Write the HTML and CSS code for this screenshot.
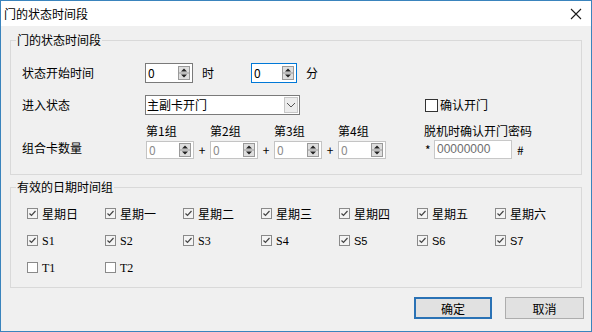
FILE: index.html
```html
<!DOCTYPE html>
<html lang="zh-CN">
<head>
  <meta charset="UTF-8" />
  <title>门的状态时间段</title>
  <link rel="stylesheet" href="styles.css">
</head>
<body>
  <div class="window">
    <div class="titlebar">
      <span class="title">门的状态时间段</span>
      <svg class="close" width="12" height="12" viewBox="0 0 12 12"><path d="M1 1L11 11M11 1L1 11" stroke="#1a1a1a" stroke-width="1.1" fill="none"/></svg>
    </div>

    <div class="content">
      <div class="group g1">
        <div class="group-title">门的状态时间段</div>

        <div class="row r1">
          <span class="label">状态开始时间</span>
          <div class="spin w48"><span class="val">0</span><span class="arrows"><svg width="12" height="14" viewBox="0 0 12 14"><rect x="0.5" y="0.5" width="11" height="13" fill="#dedede" stroke="#9a9a9a"/><line x1="1" y1="7" x2="11" y2="7" stroke="#9a9a9a"/><path d="M3 5.5L6 2.5L9 5.5Z M3 8.5L6 11.5L9 8.5Z" fill="#222"/></svg></span></div>
          <span class="unit">时</span>
          <div class="spin w46 focus"><span class="val">0</span><span class="arrows"><svg width="12" height="14" viewBox="0 0 12 14"><rect x="0.5" y="0.5" width="11" height="13" fill="#dedede" stroke="#9a9a9a"/><line x1="1" y1="7" x2="11" y2="7" stroke="#9a9a9a"/><path d="M3 5.5L6 2.5L9 5.5Z M3 8.5L6 11.5L9 8.5Z" fill="#222"/></svg></span></div>
          <span class="unit">分</span>
        </div>

        <div class="row r2">
          <span class="label">进入状态</span>
          <div class="combo">
            <span class="combo-val">主副卡开门</span>
            <span class="drop"><svg width="10" height="6" viewBox="0 0 10 6"><path d="M1 1L5 5L9 1" stroke="#555" fill="none"/></svg></span>
          </div>
          <div class="check big"><span class="box"></span>确认开门</div>
        </div>

        <div class="row r3">
          <span class="label">组合卡数量</span>
          <div class="card-groups">
            <div class="cg">
              <span class="cg-title">第1组</span>
              <div class="spin dim"><span class="val">0</span><span class="arrows"><svg width="12" height="14" viewBox="0 0 12 14"><rect x="0.5" y="0.5" width="11" height="13" fill="#dedede" stroke="#9a9a9a"/><line x1="1" y1="7" x2="11" y2="7" stroke="#9a9a9a"/><path d="M3 5.5L6 2.5L9 5.5Z M3 8.5L6 11.5L9 8.5Z" fill="#222"/></svg></span></div>
            </div>
            <span class="plus">+</span>
            <div class="cg">
              <span class="cg-title">第2组</span>
              <div class="spin dim"><span class="val">0</span><span class="arrows"><svg width="12" height="14" viewBox="0 0 12 14"><rect x="0.5" y="0.5" width="11" height="13" fill="#dedede" stroke="#9a9a9a"/><line x1="1" y1="7" x2="11" y2="7" stroke="#9a9a9a"/><path d="M3 5.5L6 2.5L9 5.5Z M3 8.5L6 11.5L9 8.5Z" fill="#222"/></svg></span></div>
            </div>
            <span class="plus">+</span>
            <div class="cg">
              <span class="cg-title">第3组</span>
              <div class="spin dim"><span class="val">0</span><span class="arrows"><svg width="12" height="14" viewBox="0 0 12 14"><rect x="0.5" y="0.5" width="11" height="13" fill="#dedede" stroke="#9a9a9a"/><line x1="1" y1="7" x2="11" y2="7" stroke="#9a9a9a"/><path d="M3 5.5L6 2.5L9 5.5Z M3 8.5L6 11.5L9 8.5Z" fill="#222"/></svg></span></div>
            </div>
            <span class="plus">+</span>
            <div class="cg">
              <span class="cg-title">第4组</span>
              <div class="spin dim"><span class="val">0</span><span class="arrows"><svg width="12" height="14" viewBox="0 0 12 14"><rect x="0.5" y="0.5" width="11" height="13" fill="#dedede" stroke="#9a9a9a"/><line x1="1" y1="7" x2="11" y2="7" stroke="#9a9a9a"/><path d="M3 5.5L6 2.5L9 5.5Z M3 8.5L6 11.5L9 8.5Z" fill="#222"/></svg></span></div>
            </div>
          </div>
          <div class="pwd">
            <span class="pwd-title">脱机时确认开门密码</span>
            <div class="pwd-row">
              <span class="sym">*</span>
              <div class="pwd-input">00000000</div>
              <span class="sym hash">#</span>
            </div>
          </div>
        </div>
      </div>

      <div class="group g2">
        <div class="group-title">有效的日期时间组</div>
        <div class="days">
          <div class="check on"><span class="box"></span>星期日</div>
          <div class="check on"><span class="box"></span>星期一</div>
          <div class="check on"><span class="box"></span>星期二</div>
          <div class="check on"><span class="box"></span>星期三</div>
          <div class="check on"><span class="box"></span>星期四</div>
          <div class="check on"><span class="box"></span>星期五</div>
          <div class="check on"><span class="box"></span>星期六</div>
          <div class="check on serif"><span class="box"></span>S1</div>
          <div class="check on serif"><span class="box"></span>S2</div>
          <div class="check on serif"><span class="box"></span>S3</div>
          <div class="check on serif"><span class="box"></span>S4</div>
          <div class="check on latin"><span class="box"></span>S5</div>
          <div class="check on latin"><span class="box"></span>S6</div>
          <div class="check on latin"><span class="box"></span>S7</div>
          <div class="check serif"><span class="box"></span>T1</div>
          <div class="check serif"><span class="box"></span>T2</div>
        </div>
      </div>

      <div class="buttons">
        <button class="btn primary">确定</button>
        <button class="btn">取消</button>
      </div>
    </div>
  </div>
</body>
</html>
```

FILE: styles.css
```css
html, body {
  margin: 0;
  padding: 0;
  background: #f0f0f0;
  font-family: "Noto Sans CJK SC", "Liberation Sans", sans-serif;
  font-size: 12px;
  line-height: 14px;
  color: #000;
}

.window {
  width: 592px;
  height: 332px;
  box-sizing: border-box;
  border: 1px solid #3a84bd;
  background: #f0f0f0;
  overflow: hidden;
}

.titlebar {
  height: 25px;
  background: #fff;
  display: flex;
  align-items: center;
  justify-content: space-between;
  padding: 0 9px 0 3px;
}

.close {
  display: block;
}

.content {
  padding: 0 9px;
}

.group {
  position: relative;
  border: 1px solid #d9d9d9;
  box-sizing: border-box;
}

.group-title {
  position: absolute;
  top: -8px;
  left: 5px;
  padding: 0 1px;
  background: #f0f0f0;
}

.g1 {
  margin-top: 14px;
  height: 135px;
  padding: 22px 0 0 11px;
}

.g2 {
  margin-top: 12px;
  height: 101px;
  padding: 12px 0 0 16px;
}

.row {
  display: flex;
  align-items: center;
}

.label {
  width: 123px;
  flex: none;
}

.r1 {
  height: 20px;
}

.r2 {
  height: 20px;
  margin-top: 12px;
}

.r3 {
  margin-top: 9px;
  align-items: flex-end;
}

.r3 .label {
  margin-bottom: 4px;
}

/* spin boxes */
.spin {
  display: flex;
  align-items: center;
  justify-content: space-between;
  box-sizing: border-box;
  height: 20px;
  border: 1px solid #7a7a7a;
  background: #fff;
  padding: 0 2px 0 2px;
}

.spin .arrows {
  display: flex;
}

.spin .arrows svg {
  display: block;
}

.w48 { width: 48px; }
.w46 { width: 46px; }

.spin.focus {
  border-color: #0078d7;
}

.spin.dim {
  width: 48px;
  height: 18px;
  border-color: #c4c4c4;
  color: #8c8c8c;
}

.spin.dim svg {
  height: 14px;
}

.unit {
  width: 49px;
  padding-left: 9px;
  flex: none;
}

/* combo */
.combo {
  width: 155px;
  height: 20px;
  box-sizing: border-box;
  border: 1px solid #7a7a7a;
  background: #fff;
  display: flex;
  align-items: center;
  justify-content: space-between;
  padding: 0 1px 0 1px;
  margin-right: 125px;
}

.drop {
  width: 14px;
  height: 16px;
  box-sizing: border-box;
  border: 1px solid #c6c6c6;
  background: #ececec;
  display: flex;
  align-items: center;
  justify-content: center;
}

/* checkboxes */
.check {
  display: flex;
  align-items: center;
  white-space: nowrap;
}

.check .box {
  width: 11px;
  height: 11px;
  box-sizing: border-box;
  border: 1px solid #8a8a8a;
  background: #fff;
  margin-right: 4px;
  flex: none;
}

.check.on .box {
  background: #f4f4f4 url("data:image/svg+xml;utf8,<svg xmlns='http://www.w3.org/2000/svg' width='9' height='9' viewBox='0 0 9 9'><path d='M1.5 4.5L3.5 6.5L7.5 2' stroke='%23444' stroke-width='1.2' fill='none'/></svg>") center no-repeat;
}

.check.big .box {
  width: 13px;
  height: 13px;
  border-color: #333;
  margin-right: 2px;
}

.serif {
  font-family: "Liberation Serif", "DejaVu Serif", serif;
  font-size: 12px;
}

.latin {
  font-family: "Liberation Sans", sans-serif;
  font-size: 11px;
}

/* card groups */
.card-groups {
  display: flex;
  align-items: flex-end;
  margin-left: 1px;
}

.cg {
  display: flex;
  flex-direction: column;
  width: 48px;
}

.cg-title {
  margin-bottom: 3px;
}

.plus {
  width: 16px;
  text-align: center;
  height: 18px;
  line-height: 18px;
}

.pwd {
  margin-left: 38px;
  display: flex;
  flex-direction: column;
}

.pwd-title {
  margin-bottom: 2px;
}

.pwd-row {
  display: flex;
  align-items: center;
}

.sym {
  width: 9px;
  padding-left: 1px;
}

.hash {
  padding-left: 5px;
}

.pwd-input {
  width: 78px;
  height: 19px;
  box-sizing: border-box;
  border: 1px solid #c8c8c8;
  background: #fff;
  color: #6d6d6d;
  padding-left: 2px;
  line-height: 17px;
  font-family: "Liberation Sans", sans-serif;
}

/* day groups */
.days {
  display: grid;
  grid-template-columns: repeat(7, 78px);
  grid-auto-rows: 27px;
  align-items: center;
}

/* buttons */
.buttons {
  display: flex;
  justify-content: flex-end;
  gap: 13px;
  margin-top: 9px;
  margin-right: -2px;
}

.btn {
  width: 79px;
  height: 22px;
  box-sizing: border-box;
  border: 1px solid #adadad;
  background: #e1e1e1;
  font-family: inherit;
  font-size: 12px;
  padding: 0;
  color: #000;
}

.btn.primary {
  width: 78px;
  border: 2px solid #2a72b5;
}
```
